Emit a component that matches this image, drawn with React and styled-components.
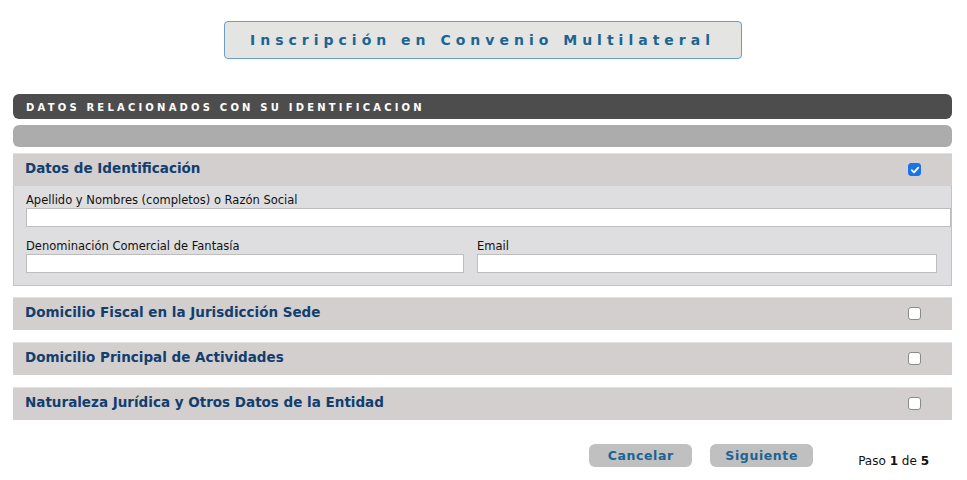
import React from 'react';
import styled, { createGlobalStyle } from 'styled-components';

const Global = createGlobalStyle`
  body {
    margin: 0;
    background: #fff;
    font-family: "DejaVu Sans", Verdana, sans-serif;
  }
`;

const Page = styled.div`
  width: 939px;
  padding: 21px 15px 0 13px;
`;

const TitleWrap = styled.div`
  display: flex;
  justify-content: center;
  margin-bottom: 35px;
`;

const TitleBox = styled.div`
  width: 516px;
  height: 36px;
  box-sizing: content-box;
  border: 1px solid #6a9cc4;
  border-radius: 4px;
  background: #e4e4e3;
  display: flex;
  align-items: center;
  justify-content: center;
  color: #1b6593;
  font-weight: bold;
  font-size: 14px;
  letter-spacing: 5px;
`;

const Bar = styled.div`
  height: ${p => p.$h}px;
  border-radius: 6px;
  background: ${p => p.$bg};
  color: #fff;
  font-size: 10px;
  font-weight: bold;
  letter-spacing: 3.2px;
  display: flex;
  align-items: center;
  padding: 1px 0 0 13px;
  box-sizing: border-box;
  margin-bottom: 6px;
`;

const Section = styled.div`
  margin-bottom: ${p => (p.$open ? 11 : 12)}px;
`;

const Header = styled.div`
  height: 33px;
  background: #d3cfcf;
  border-top: 1px solid #e2e0e0;
  box-sizing: border-box;
  display: flex;
  align-items: center;
  justify-content: space-between;
  padding: 0 31px 4px 12px;
  color: #123e6e;
  font-weight: bold;
  font-size: 13.5px;
`;

const Check = styled.span`
  width: 13px;
  height: 13px;
  box-sizing: border-box;
  border-radius: 3px;
  display: inline-flex;
  align-items: center;
  justify-content: center;
  margin-top: 3px;
  background: ${p => (p.$on ? '#1a73e8' : '#fff')};
  border: 1px solid ${p => (p.$on ? '#1a73e8' : '#8a8a8a')};
`;

const Body = styled.div`
  background: #dedee0;
  border: 1px solid #c3c3c3;
  border-top: none;
  padding: 7px 0 12px 12px;
  display: flex;
  flex-direction: column;
  gap: 12px;
`;

const Row = styled.div`
  display: grid;
  grid-template-columns: ${p => p.$cols};
  column-gap: 13px;
`;

const Field = styled.label`
  display: flex;
  flex-direction: column;
  font-size: 11.5px;
  color: #111;
`;

const Input = styled.div`
  height: 19px;
  box-sizing: border-box;
  margin-top: 1px;
  background: #fff;
  border: 1px solid #bdbdbd;
`;

const Footer = styled.div`
  display: flex;
  align-items: flex-start;
  justify-content: flex-end;
  padding: 12px 23px 0 0;
`;

const Button = styled.button`
  width: 103px;
  height: 23px;
  border: none;
  border-radius: 6px;
  background: #c0c0c0;
  color: #1a6493;
  font-family: "DejaVu Sans", Verdana, sans-serif;
  font-weight: bold;
  font-size: 12.5px;
  letter-spacing: 0.6px;
  margin-right: 18px;
  padding: 0;
`;

const Step = styled.div`
  font-size: 12px;
  color: #111;
  margin-left: 27px;
  margin-top: 10px;
  b { font-weight: bold; }
`;

const CheckMark = () => (
  <svg width="10" height="10" viewBox="0 0 10 10">
    <path d="M1.8 5.2 L4 7.4 L8.3 2.6" stroke="#fff" strokeWidth="1.8" fill="none" strokeLinecap="round" strokeLinejoin="round" />
  </svg>
);

const sections = [
  'Domicilio Fiscal en la Jurisdicción Sede',
  'Domicilio Principal de Actividades',
  'Naturaleza Jurídica y Otros Datos de la Entidad',
];

export default function App() {
  return (
    <>
      <Global />
      <Page>
        <TitleWrap>
          <TitleBox>Inscripción en Convenio Multilateral</TitleBox>
        </TitleWrap>
        <Bar $h={25} $bg="#4d4d4d">DATOS RELACIONADOS CON SU IDENTIFICACION</Bar>
        <Bar $h={22} $bg="#acacac" />
        <Section $open>
          <Header>
            Datos de Identificación
            <Check $on><CheckMark /></Check>
          </Header>
          <Body>
            <Row $cols="1fr">
              <Field>
                Apellido y Nombres (completos) o Razón Social
                <Input />
              </Field>
            </Row>
            <Row $cols="438px 460px">
              <Field>
                Denominación Comercial de Fantasía
                <Input />
              </Field>
              <Field>
                Email
                <Input />
              </Field>
            </Row>
          </Body>
        </Section>
        {sections.map(s => (
          <Section key={s}>
            <Header>
              {s}
              <Check />
            </Header>
          </Section>
        ))}
        <Footer>
          <Button>Cancelar</Button>
          <Button>Siguiente</Button>
          <Step>Paso <b>1</b> de <b>5</b></Step>
        </Footer>
      </Page>
    </>
  );
}
